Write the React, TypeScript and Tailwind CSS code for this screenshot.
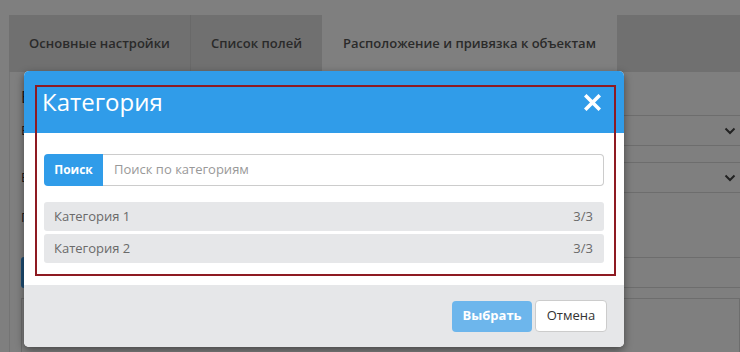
import React from 'react';

const Chevron = () => (
  <svg width="12" height="8" viewBox="0 0 12 8">
    <path d="M1.5 1.5l4.5 4.5 4.5-4.5" fill="none" stroke="#444" strokeWidth="2" />
  </svg>
);

const CloseIcon = () => (
  <svg width="17" height="17" viewBox="0 0 17 17">
    <path d="M2.5 2.5l12 12M14.5 2.5l-12 12" stroke="#fff" strokeWidth="3.6" strokeLinecap="square" />
  </svg>
);

const categories = [
  { name: 'Категория 1', count: '3/3' },
  { name: 'Категория 2', count: '3/3' },
];

export default function App() {
  return (
    <div className="relative w-[740px] h-[352px] overflow-hidden bg-white font-['Open_Sans',sans-serif]">
      {/* page behind the dialog */}
      <div className="pt-[15px] pl-[9px]">
        <div className="flex h-[57px] text-[13px] font-semibold text-[#555]">
          <div className="w-[181px] bg-[#e0e0e0] flex items-center justify-center">Основные настройки</div>
          <div className="w-[132px] bg-[#e0e0e0] border-l border-[#d2d2d2] flex items-center justify-center">
            Список полей
          </div>
          <div className="w-[295px] bg-white flex items-center justify-center">
            Расположение и привязка к объектам
          </div>
          <div className="flex-1 bg-[#e0e0e0]" />
        </div>

        <div className="border-l border-[#e8e8e8] pl-[11px] pt-[14px] h-[280px] text-[#333]">
          <div className="text-[16px] leading-[22px]">Выбор объекта привязки</div>
          <div className="mt-[7px] flex items-center h-[31px] text-[13px]">
            <span>Вид объекта</span>
            <div className="ml-auto w-[440px] h-full border-y border-[#dadada] flex items-center justify-end pr-[4px]">
              <Chevron />
            </div>
          </div>
          <div className="mt-[16px] flex items-center h-[31px] text-[13px]">
            <span>Выбор слоя</span>
            <div className="ml-auto w-[440px] h-full border-y border-[#dadada] flex items-center justify-end pr-[4px]">
              <Chevron />
            </div>
          </div>
          <div className="mt-[15px] h-[20px] flex items-center text-[13px]">Привязка к объекту</div>
          <div className="mt-[29px] flex h-[31px]">
            <div className="w-[110px] bg-[#3a9ae8] rounded-[3px]" />
            <div className="ml-auto w-[440px] border-y border-[#dadada]" />
          </div>
          <div className="mt-[10px] h-[60px] border border-[#dadada]" />
        </div>
      </div>

      <div className="absolute inset-0 bg-black/50" />

      {/* dialog */}
      <div className="absolute left-[24px] top-[71px] w-[600px] rounded-[5px] overflow-hidden bg-white shadow-[0_3px_9px_rgba(0,0,0,0.45)]">
        <div className="h-[62px] bg-[#309ce9] flex items-center justify-between pl-[18px] pr-[23px]">
          <h3 className="text-[24px] leading-none text-white">Категория</h3>
          <button className="flex items-center justify-center">
            <CloseIcon />
          </button>
        </div>

        <div className="px-[20px] pt-[21px] pb-[22px]">
          <div className="flex h-[32px]">
            <button className="w-[59px] bg-[#309ce9] rounded-l-[4px] text-white font-bold text-[12px]">Поиск</button>
            <div className="flex-1 border border-l-0 border-[#cccccc] rounded-r-[4px] pl-[11px] flex items-center text-[13px] text-[#999]">
              Поиск по категориям
            </div>
          </div>

          <div className="mt-[16px] flex flex-col gap-[3px]">
            {categories.map((c) => (
              <div
                key={c.name}
                className="h-[29px] bg-[#e6e7e9] rounded-[3px] flex items-center justify-between pl-[10px] pr-[11px] text-[13px] text-[#6a6a6a]"
              >
                <span>{c.name}</span>
                <span>{c.count}</span>
              </div>
            ))}
          </div>
        </div>

        <div className="h-[62px] bg-[#e6e7e9] flex items-center justify-end pr-[17px] gap-[3px]">
          <button className="w-[80px] h-[31px] bg-[#6db6ec] rounded-[4px] text-white font-bold text-[13px]">Выбрать</button>
          <button className="w-[72px] h-[32px] bg-white border border-[#cccccc] rounded-[4px] text-[13px] text-[#333]">
            Отмена
          </button>
        </div>

        <div className="absolute left-[11px] top-[14px] w-[581px] h-[191px] border-2 border-[#8e1a22] pointer-events-none" />
      </div>
    </div>
  );
}
